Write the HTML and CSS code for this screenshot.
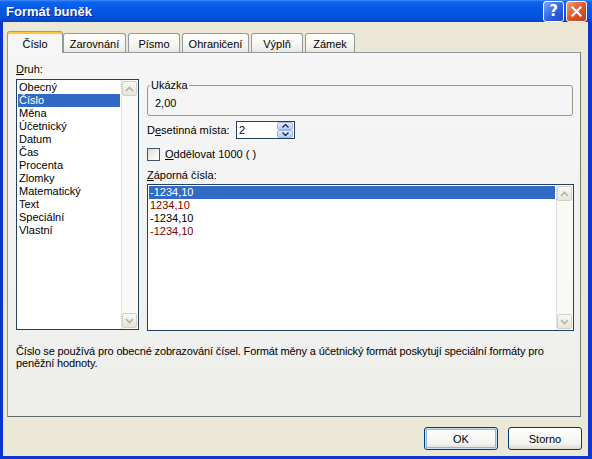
FILE: index.html
```html
<!DOCTYPE html>
<html lang="cs">
<head>
<meta charset="utf-8">
<title>Formát buněk</title>
<link rel="stylesheet" href="styles.css">
</head>
<body>
<div class="window">
  <div class="titlebar">
    <span class="title">Formát buněk</span>
    <div class="caption-buttons">
      <span class="cbtn help">?</span>
      <span class="cbtn close"><svg width="11" height="11" viewBox="0 0 11 11"><path d="M1.5 1.5 L9.5 9.5 M9.5 1.5 L1.5 9.5" stroke="#fff" stroke-width="2.2" stroke-linecap="square"/></svg></span>
    </div>
  </div>
  <div class="frame">
    <div class="tabs">
      <div class="tab active tw-cislo">Číslo</div>
      <div class="tab tw-zar">Zarovnání</div>
      <div class="tab tw-pis">Písmo</div>
      <div class="tab tw-ohr">Ohraničení</div>
      <div class="tab tw-vyp">Výplň</div>
      <div class="tab tw-zam">Zámek</div>
    </div>
    <div class="panel">
      <div class="main">
        <div class="left">
          <div class="label"><u>D</u>ruh:</div>
          <div class="listbox cat">
            <ul class="items">
              <li>Obecný</li>
              <li class="sel">Číslo</li>
              <li>Měna</li>
              <li>Účetnický</li>
              <li>Datum</li>
              <li>Čas</li>
              <li>Procenta</li>
              <li>Zlomky</li>
              <li>Matematický</li>
              <li>Text</li>
              <li>Speciální</li>
              <li>Vlastní</li>
            </ul>
            <div class="scrollbar">
              <span class="sbtn"><svg width="9" height="6" viewBox="0 0 9 6"><path d="M1 5 L4.5 1.5 L8 5" fill="none" stroke="#b3b1a3" stroke-width="1.6"/></svg></span>
              <span class="sbtn"><svg width="9" height="6" viewBox="0 0 9 6"><path d="M1 1 L4.5 4.5 L8 1" fill="none" stroke="#b3b1a3" stroke-width="1.6"/></svg></span>
            </div>
          </div>
        </div>
        <div class="right">
          <fieldset class="sample">
            <legend>Ukázka</legend>
            <div class="sample-val">2,00</div>
          </fieldset>
          <div class="row decimals">
            <span class="dec-label">D<u>e</u>setinná místa:</span>
            <div class="spin">
              <span class="spin-val">2</span>
              <div class="spin-btns">
                <span class="spin-btn"><svg width="7" height="4" viewBox="0 0 7 4"><path d="M0.5 3.5 L3.5 0.5 L6.5 3.5" fill="none" stroke="#1e2f57" stroke-width="1.4"/></svg></span>
                <span class="spin-btn"><svg width="7" height="4" viewBox="0 0 7 4"><path d="M0.5 0.5 L3.5 3.5 L6.5 0.5" fill="none" stroke="#1e2f57" stroke-width="1.4"/></svg></span>
              </div>
            </div>
          </div>
          <div class="row check">
            <span class="checkbox"></span>
            <span><u>O</u>ddělovat 1000 ( )</span>
          </div>
          <div class="label neg-label"><u>Z</u>áporná čísla:</div>
          <div class="listbox neg">
            <ul class="items">
              <li class="sel">-1234,10</li>
              <li class="red">1234,10</li>
              <li>-1234,10</li>
              <li class="red">-1234,10</li>
            </ul>
            <div class="scrollbar">
              <span class="sbtn"><svg width="9" height="6" viewBox="0 0 9 6"><path d="M1 5 L4.5 1.5 L8 5" fill="none" stroke="#b3b1a3" stroke-width="1.6"/></svg></span>
              <span class="sbtn"><svg width="9" height="6" viewBox="0 0 9 6"><path d="M1 1 L4.5 4.5 L8 1" fill="none" stroke="#b3b1a3" stroke-width="1.6"/></svg></span>
            </div>
          </div>
        </div>
      </div>
      <p class="desc">Číslo se používá pro obecné zobrazování čísel. Formát měny a účetnický formát poskytují speciální formáty pro peněžní hodnoty.</p>
    </div>
    <div class="buttons">
      <button class="btn default">OK</button>
      <button class="btn">Storno</button>
    </div>
  </div>
</div>
</body>
</html>
```
FILE: styles.css
```css
* { box-sizing: border-box; }
html, body { margin: 0; padding: 0; }
body {
  width: 592px;
  height: 459px;
  overflow: hidden;
  font-family: "Liberation Sans", Arial, sans-serif;
  font-size: 11px;
  line-height: 13px;
  color: #000;
  background: #ece9d8;
}
u { text-decoration: underline; text-underline-offset: 1px; }

.window { display: flex; flex-direction: column; width: 592px; height: 459px; }

.titlebar {
  height: 22px;
  flex: none;
  display: flex;
  align-items: center;
  padding-left: 6px;
  background: linear-gradient(to bottom, #3d8cf8 0, #0d62ee 2px, #0659e8 9px, #0451dd 17px, #0343c9 22px);
}
.title {
  flex: 1;
  color: #fff;
  font-weight: bold;
  font-size: 13px;
  text-shadow: 1px 1px 0 #0b2a8a;
}
.caption-buttons { display: flex; gap: 2px; margin-right: 5px; align-self: flex-start; margin-top: 1px; }
.cbtn {
  width: 21px;
  height: 21px;
  border: 1px solid #fff;
  border-radius: 3px;
  display: flex;
  align-items: center;
  justify-content: center;
}
.help {
  background: linear-gradient(135deg, #78a6fa, #2e62e4 55%, #1c4cc8);
  color: #fff;
  font-weight: bold;
  font-size: 15px;
  font-family: "DejaVu Sans", sans-serif;
}
.close { background: linear-gradient(135deg, #f39a7a, #e0582f 50%, #c23c18); }

.frame {
  flex: 1;
  display: flex;
  flex-direction: column;
  border: solid #0b37cf;
  border-width: 0 4px 3px 3px;
  padding: 9px 6px 0 4px;
  background: #ebe8d6;
}

.tabs { display: flex; align-items: flex-end; gap: 2px; height: 22px; margin-bottom: -1px; }
.tab {
  height: 19px;
  margin-bottom: 1px;
  padding-top: 2px;
  border: 1px solid #919b9c;
  border-bottom: none;
  border-radius: 3px 3px 0 0;
  background: linear-gradient(#ffffff, #f6f5f1 60%, #e9e7df);
  display: flex;
  align-items: center;
  justify-content: center;
}
.tab.active {
  height: 22px;
  margin-bottom: 0;
  margin-right: -2px;
  padding-top: 4px;
  position: relative;
  z-index: 1;
  border-top: 1px solid #e68b2c;
  box-shadow: inset 0 2px 0 #ffc73c;
  background: #f6f6f7;
}
.tw-cislo { width: 56px; }
.tw-zar { width: 63px; }
.tw-pis { width: 52px; }
.tw-ohr { width: 67px; }
.tw-vyp { width: 52px; }
.tw-zam { width: 50px; }

.panel {
  width: 574px;
  height: 365px;
  flex: none;
  border: 1px solid #8f9a9c;
  border-right-color: #6f7a7c;
  border-bottom-color: #5f6a6c;
  background: linear-gradient(#f6f6f7, #f1f1f1 60%, #eeeeea);
  display: flex;
  flex-direction: column;
}
.main { display: flex; gap: 8px; padding: 10px 0 0 8px; }
.left { width: 123px; display: flex; flex-direction: column; }
.label { height: 13px; }
.left .label { margin-bottom: 3px; }
.right { width: 427px; display: flex; flex-direction: column; padding-top: 16px; }

.listbox { display: flex; border: 1px solid #23405c; background: #fff; }
.cat { height: 251px; }
.neg { height: 147px; }
.items { flex: 1; list-style: none; margin: 0; padding: 1px; min-width: 0; }
.items li { height: 13px; line-height: 13px; padding-left: 1px; white-space: nowrap; }
.items li.sel { background: #316ac5; color: #fff; }
.items li.red { color: #800000; }
.scrollbar {
  width: 17px;
  flex: none;
  display: flex;
  flex-direction: column;
  justify-content: space-between;
  align-items: flex-end;
  padding: 1px 1px 1px 0;
  background: #f9f9f5;
  border-left: 1px dotted #cdcbbd;
}
.sbtn {
  width: 15px;
  height: 15px;
  border: 1px solid #d2d0c2;
  border-radius: 2px;
  background: linear-gradient(#f9f8f3, #e7e5d9);
  display: flex;
  align-items: center;
  justify-content: center;
}

.sample {
  margin: 0 1px 0 0;
  padding: 5px 7px 5px;
  border: 1px solid #8f9a88;
  border-radius: 3px;
  min-width: 0;
}
.sample legend { padding: 0 1px; margin-left: -5px; line-height: 13px; }
.sample-val { height: 13px; }

.row { display: flex; align-items: center; }
.decimals { margin-top: 5px; height: 18px; }
.dec-label { width: 89px; }
.spin {
  width: 59px;
  height: 18px;
  border: 1px solid #23405c;
  background: #fff;
  display: flex;
}
.spin-val { flex: 1; padding-left: 2px; line-height: 16px; }
.spin-btns { width: 16px; display: flex; flex-direction: column; margin: 0 1px 0 0; }
.spin-btn {
  flex: 1;
  border: 1px solid #9fb6e6;
  border-radius: 2px;
  background: linear-gradient(#e2ebfd, #b9ccf6);
  display: flex;
  align-items: center;
  justify-content: center;
}

.check { margin-top: 9px; height: 13px; gap: 5px; }
.checkbox {
  width: 13px;
  height: 13px;
  border: 1px solid #3f556c;
  background: linear-gradient(135deg, #dcdbd4, #f6f6f3 70%, #ffffff);
}
.neg-label { margin-top: 8px; margin-bottom: 2px; }

.desc { margin: 14px 8px 0 8px; line-height: 12px; letter-spacing: -0.14px; }

.buttons { display: flex; justify-content: flex-end; gap: 10px; margin-top: 10px; }
.btn {
  width: 74px;
  height: 23px;
  padding: 0;
  border: 1px solid #003c74;
  border-radius: 3px;
  background: linear-gradient(#ffffff, #f3f3ef 75%, #dcd8cd);
  font-family: "Liberation Sans", Arial, sans-serif;
  font-size: 11px;
  color: #000;
}
.btn.default { box-shadow: inset 0 0 0 1px #cee3fb, inset 0 0 0 2px #8fb4ec; }
```
